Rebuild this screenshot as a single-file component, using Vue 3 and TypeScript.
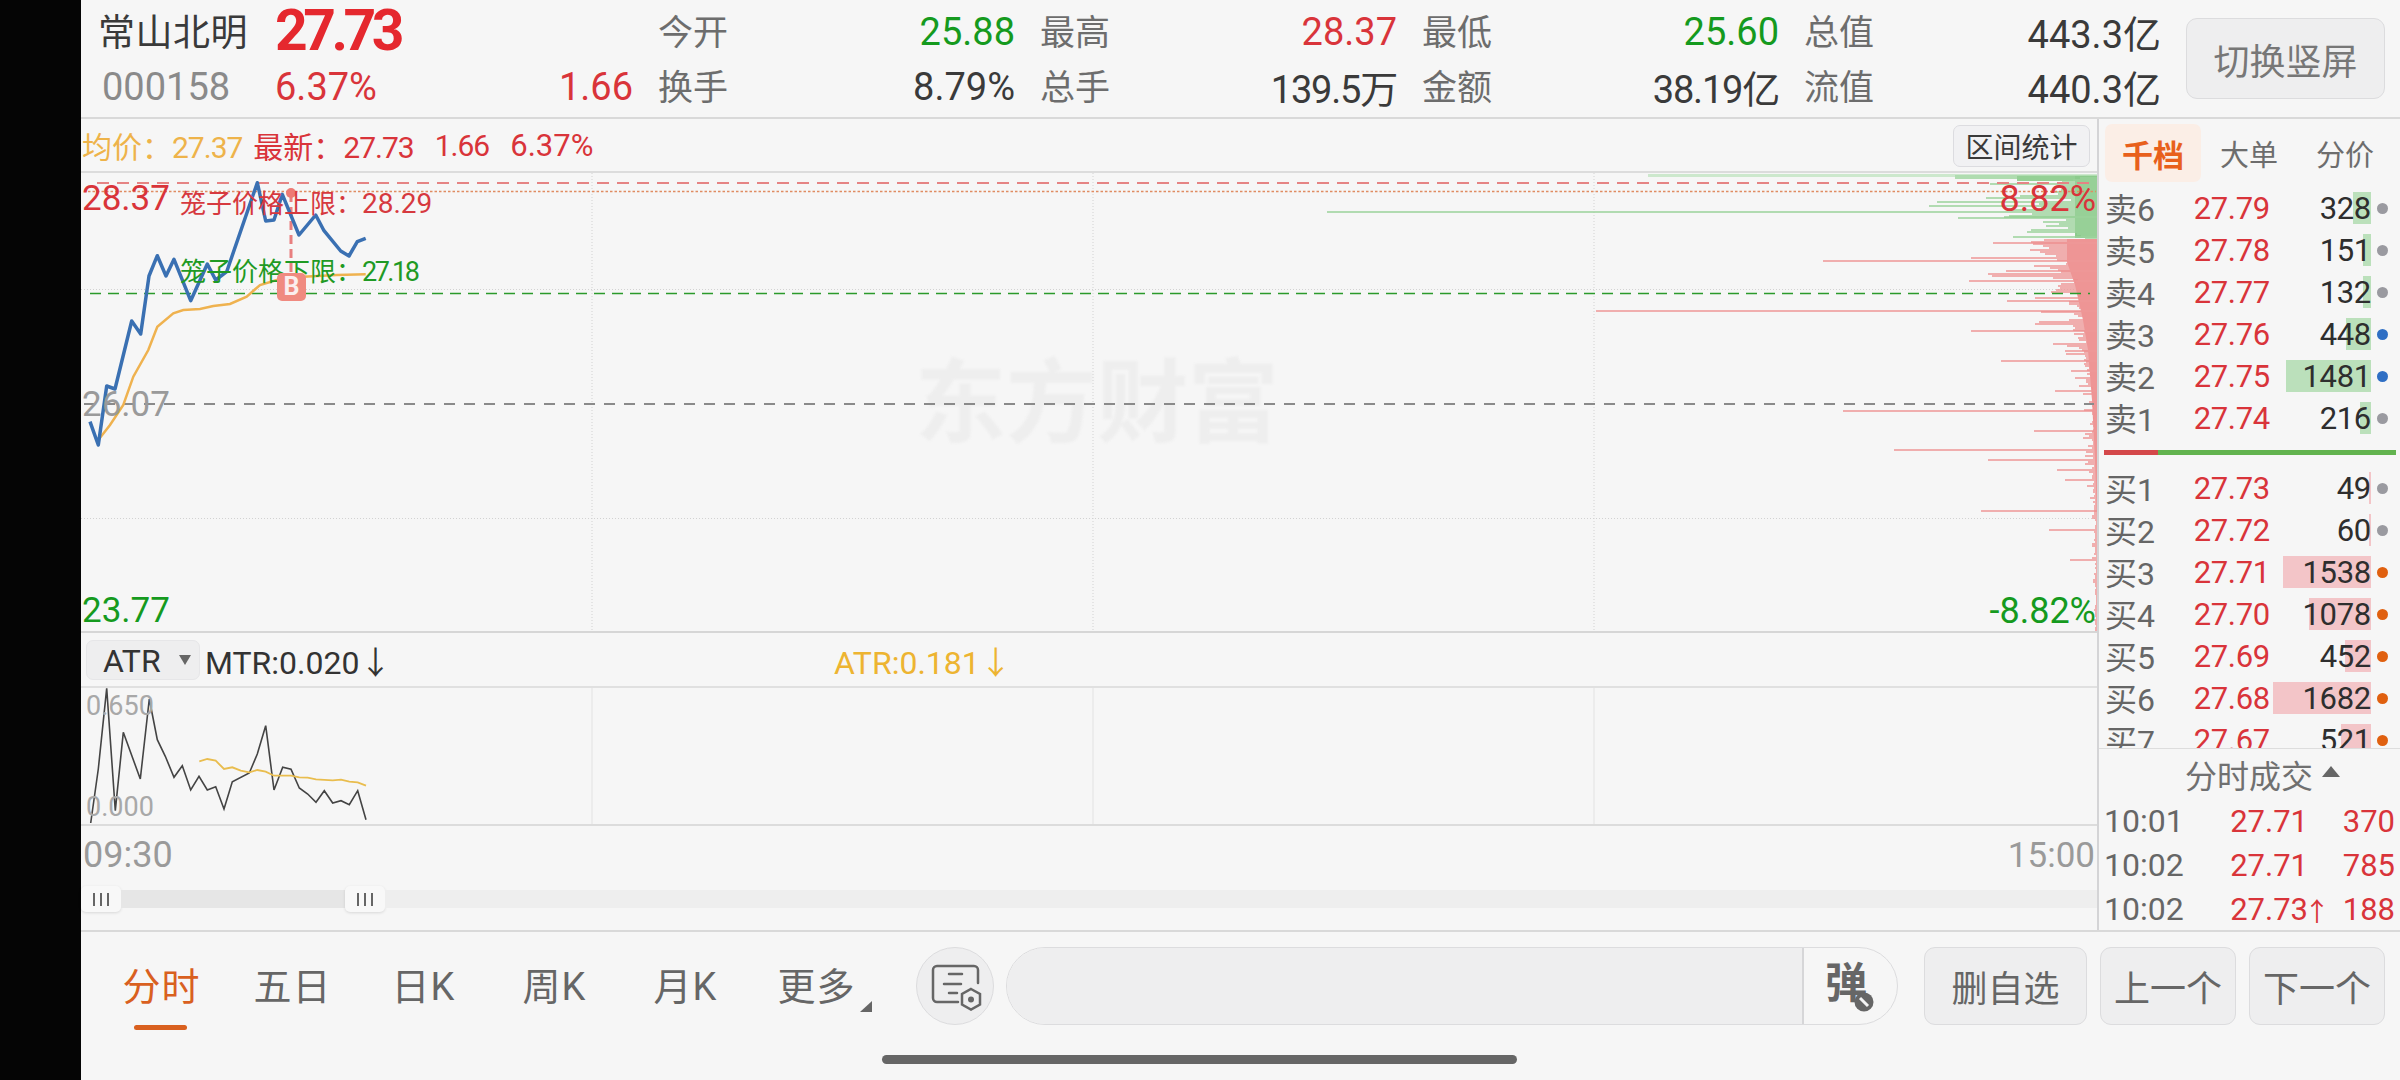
<script setup lang="ts">
type P = [number, number]
const toPts = (a: P[], ox: number, oy: number) =>
  a.map(([x, y]) => `${(ox + x / 3).toFixed(1)},${(oy + y / 3).toFixed(1)}`).join(' ')

const bluePts = toPts([[60,815],[85,885],[110,708],[135,717],[185,513],[212,552],[237,378],[262,317],[288,378],[312,328],[362,452],[412,342],[437,390],[470,365],[562,98],[587,213],[612,210],[637,133],[687,255],[737,195],[762,242],[812,303],[837,318],[862,275],[887,265]], 70, 150)
const avgPts = toPts([[85,870],[120,825],[160,765],[190,680],[235,600],[262,530],[310,490],[340,480],[390,477],[430,468],[480,462],[530,440],[570,405],[620,390],[700,380],[800,375],[887,373]], 70, 150)
const mtrPts = toPts([[92,612],[115,450],[140,208],[166,575],[190,340],[241,480],[268,240],[292,362],[316,412],[342,475],[367,440],[392,513],[417,472],[442,513],[467,503],[492,570],[517,488],[568,462],[592,405],[617,320],[642,513],[668,445],[693,451],[718,507],[743,525],[768,550],[793,515],[818,552],[843,545],[868,557],[893,515],[918,602]], 60, 620)
const atrPts = toPts([[418,427],[442,420],[467,425],[492,450],[517,445],[542,455],[568,460],[592,453],[617,458],[642,470],[693,470],[718,475],[743,476],[768,481],[818,484],[843,482],[868,488],[893,490],[918,500]], 60, 620)

let seed = 7
const rnd = () => { seed = (seed * 16807) % 2147483647; return seed / 2147483647 }
const env = (t: P[], y: number) => {
  for (let i = 1; i < t.length; i++) {
    if (y <= t[i][0]) {
      const k = (y - t[i - 1][0]) / (t[i][0] - t[i - 1][0])
      return t[i - 1][1] + k * (t[i][1] - t[i - 1][1])
    }
  }
  return t[t.length - 1][1]
}
const R = 2097
const build = (from: number, to: number, t: P[], spikes: P[]) => {
  let d = ''
  for (let y = from; y <= to; y += 2) {
    const w = env(t, y) * (0.55 + rnd() * (rnd() > 0.7 ? 2.6 : 0.9))
    d += `M${(R - w).toFixed(0)} ${y}H${R}`
  }
  for (const [y, x] of spikes) d += `M${x} ${y}H${R}`
  return d
}
const greenD = build(178, 238, [[178,30],[190,28],[200,40],[212,75],[222,45],[232,25],[238,14]],
  [[212,1327],[202,1937],[217,2004],[222,2043],[232,2027],[237,2013],[184,1990],[196,2020]])
const redD = build(240, 632, [[240,48],[260,48],[280,34],[310,24],[340,15],[370,9],[410,5],[460,4],[500,3],[520,2],[632,1.5]],
  [[243,1993],[261,1823],[271,2006],[281,1969],[301,2007],[311,1596],[331,1971],[351,2065],[361,2001],[371,2071],[391,2055],[411,1843],[431,2034],[450,1894],[460,1988],[470,2057],[480,2065],[511,1981],[530,2049],[560,2070]])

const statCells = [
  ['今开', '25.88', 'g'], ['最高', '28.37', 'r'], ['最低', '25.60', 'g'], ['总值', '443.3亿', 'd'],
  ['换手', '8.79%', 'd'], ['总手', '139.5万', 'd narrow'], ['金额', '38.19亿', 'd narrow'], ['流值', '440.3亿', 'd'],
]

const asks = [
  { l: '卖6', p: '27.79', q: '328', w: 18, c: '#9a9aa0' },
  { l: '卖5', p: '27.78', q: '151', w: 8, c: '#9a9aa0' },
  { l: '卖4', p: '27.77', q: '132', w: 8, c: '#9a9aa0' },
  { l: '卖3', p: '27.76', q: '448', w: 25, c: '#2f6fc4' },
  { l: '卖2', p: '27.75', q: '1481', w: 85, c: '#2f6fc4' },
  { l: '卖1', p: '27.74', q: '216', w: 11, c: '#9a9aa0' },
]
const bids = [
  { l: '买1', p: '27.73', q: '49', w: 2, c: '#9a9aa0' },
  { l: '买2', p: '27.72', q: '60', w: 2, c: '#9a9aa0' },
  { l: '买3', p: '27.71', q: '1538', w: 88, c: '#e0600f' },
  { l: '买4', p: '27.70', q: '1078', w: 62, c: '#e0600f' },
  { l: '买5', p: '27.69', q: '452', w: 26, c: '#e0600f' },
  { l: '买6', p: '27.68', q: '1682', w: 98, c: '#e0600f' },
  { l: '买7', p: '27.67', q: '521', w: 30, c: '#e0600f' },
]
const trades = [
  { t: '10:01', p: '27.71', a: '', q: '370' },
  { t: '10:02', p: '27.71', a: '', q: '785' },
  { t: '10:02', p: '27.73', a: '↑', q: '188' },
]
const periods = ['分时', '五日', '日K', '周K', '月K', '更多']
</script>

<template>
  <div class="screen">
    <div class="notch"></div>
    <div class="main">
      <header class="head">
        <div class="quote">
          <div class="qrow">
            <span class="name">常山北明</span>
            <span class="last">27.73</span>
          </div>
          <div class="qrow">
            <span class="code">000158</span>
            <span class="pct">6.37%</span>
            <span class="chg">1.66</span>
          </div>
        </div>
        <div class="stats">
          <div v-for="s in statCells" :key="s[0]" class="stat">
            <span class="lab">{{ s[0] }}</span>
            <span :class="s[2]">{{ s[1] }}</span>
          </div>
        </div>
        <button class="switch">切换竖屏</button>
      </header>

      <section class="body">
        <div class="chartcol">
          <div class="info">
            <span class="y">均价：<span class="num">27.37</span></span>
            <span class="r latest">最新：<span class="num">27.73</span></span>
            <span class="r gap1 num">1.66</span>
            <span class="r gap2">6.37%</span>
            <button class="range">区间统计</button>
          </div>

          <div class="plot">
            <div class="mark">东方财富</div>
            <svg class="canvas" viewBox="81 173 2017 460" width="2017" height="460">
              <g stroke="#d2d2d2" stroke-width="1" stroke-dasharray="1 2">
                <path d="M592 173V633M1093 173V633M1594 173V633M81 289.500H2098M81 518.500H2098" fill="none" />
              </g>
              <rect x="1648" y="174" width="449" height="3" fill="#cde8cd" />
              <rect x="1955" y="175" width="142" height="4" fill="#b0dcb0" />
              <rect x="2017" y="176" width="80" height="5" fill="#95d095" />
              <rect x="2075" y="176" width="22" height="62" fill="#8ccb8c" />
              <polygon points="2067,239 2097,239 2097,520 2095,460 2092,400 2088,350 2083,320 2075,285 2067,262" fill="#ee9090" />
              <path :d="greenD" stroke="#9ad29a" stroke-width="1.500" fill="none" />
              <path :d="redD" stroke="#ee9797" stroke-width="1.500" fill="none" />
              <path d="M97 183H2090" stroke="#e58484" stroke-width="2" stroke-dasharray="12 8" fill="none" />
              <path d="M88 191.500H2096" stroke="#e08c62" stroke-width="1.500" stroke-dasharray="2.500 2" fill="none" />
              <path d="M90 293.500H2090" stroke="#2b9a2b" stroke-width="1.500" stroke-dasharray="11 7" fill="none" />
              <path d="M84 404H2094" stroke="#8a8a8a" stroke-width="2" stroke-dasharray="11 9" fill="none" />
              <path d="M291 193V273" stroke="#e87f7f" stroke-width="3" stroke-dasharray="9 5" fill="none" />
              <circle cx="291" cy="193" r="5" fill="#ee7a74" />
              <polyline :points="avgPts" fill="none" stroke="#efb24f" stroke-width="2.500" />
              <polyline :points="bluePts" fill="none" stroke="#3a70b2" stroke-width="3.500" stroke-linejoin="round" />
            </svg>
            <span class="axis r at-top">28.37</span>
            <span class="axis grey at-mid">26.07</span>
            <span class="axis g at-low">23.77</span>
            <span class="axis r at-top right">8.82%</span>
            <span class="axis g at-low right">-8.82%</span>
            <span class="cage up">笼子价格上限：<span class="cnum">28.29</span></span>
            <span class="cage down">笼子价格下限：<span class="cnum tight">27.18</span></span>
            <span class="bmark">B</span>
          </div>

          <div class="ind-head">
            <div class="select">ATR<i class="tri"></i></div>
            <span class="mtr">MTR:0.020↓</span>
            <span class="atr">ATR:0.181↓</span>
          </div>

          <div class="ind">
            <svg class="canvas" viewBox="81 689 2017 136" width="2017" height="136">
              <path d="M592 689V825M1093 689V825M1594 689V825" stroke="#e2e2e2" stroke-width="1" fill="none" />
              <polyline :points="mtrPts" fill="none" stroke="#444" stroke-width="1.600" />
              <polyline :points="atrPts" fill="none" stroke="#e9bd4e" stroke-width="1.800" />
            </svg>
            <span class="ind-lab top">0.650</span>
            <span class="ind-lab bot">0.000</span>
          </div>

          <div class="times"><span>09:30</span><span class="end">15:00</span></div>

          <div class="scroll">
            <div class="handle"><i></i><i></i><i></i></div>
            <div class="fill"></div>
            <div class="handle"><i></i><i></i><i></i></div>
            <div class="rest"></div>
          </div>
        </div>

        <aside class="side">
          <div class="tabs">
            <span class="tab on">千档</span>
            <span class="tab">大单</span>
            <span class="tab">分价</span>
          </div>
          <div v-for="o in asks" :key="o.l" class="row">
            <span class="rl">{{ o.l }}</span>
            <span class="rp">{{ o.p }}</span>
            <span class="rq"><b class="bar sell" :style="{ width: o.w + 'px' }"></b><em>{{ o.q }}</em></span>
            <i class="dot" :style="{ background: o.c }"></i>
          </div>
          <div class="ratio"><div class="ratio-r"></div><div class="ratio-g"></div></div>
          <div class="bids">
            <div v-for="o in bids" :key="o.l" class="row">
              <span class="rl">{{ o.l }}</span>
              <span class="rp">{{ o.p }}</span>
              <span class="rq"><b class="bar buy" :style="{ width: o.w + 'px' }"></b><em>{{ o.q }}</em></span>
              <i class="dot" :style="{ background: o.c }"></i>
            </div>
          </div>
          <div class="tr-head">分时成交<i class="up-tri"></i></div>
          <div v-for="(t, i) in trades" :key="i" class="trade">
            <span class="tt">{{ t.t }}</span>
            <span class="tp">{{ t.p }}</span>
            <span class="ta">{{ t.a }}</span>
            <span class="tq">{{ t.q }}</span>
          </div>
        </aside>
      </section>

      <footer class="foot">
        <nav class="periods">
          <div v-for="(p, i) in periods" :key="p" class="period" :class="{ on: i === 0, more: i === 5 }">{{ p }}</div>
        </nav>
        <div class="round">
          <svg width="78" height="78" viewBox="0 0 78 78" fill="none" stroke="#666" stroke-width="2.500" stroke-linecap="round">
            <path d="M42 55H21a4 4 0 0 1-4-4V23a4 4 0 0 1 4-4h37a4 4 0 0 1 4 4v13" />
            <path d="M33 27H46M28 37H45M33 46H41" />
            <path d="M55 42l9 5v10.500L55 62.500l-9-5V47z" />
            <circle cx="55" cy="52.500" r="3" fill="#666" stroke="none" />
          </svg>
        </div>
        <div class="danmu">
          <div class="danmu-in"></div>
          <div class="danmu-btn">
            <span>弹</span>
            <svg class="nosign" width="20" height="20" viewBox="0 0 20 20">
              <circle cx="10" cy="10" r="9.500" fill="#666" />
              <path d="M6 6L14 14" stroke="#f4f4f4" stroke-width="3" />
            </svg>
          </div>
        </div>
        <button class="act del">删自选</button>
        <button class="act nav">上一个</button>
        <button class="act nav">下一个</button>
      </footer>
      <div class="home"></div>
    </div>
  </div>
</template>

<style>
html, body { margin: 0; background: #000; }
</style>

<style scoped>
* { box-sizing: border-box; }
.screen {
  width: 2400px; height: 1080px; display: flex; overflow: hidden; background: #f6f6f6;
  font-family: Roboto, "Noto Sans CJK SC", sans-serif; color: #333;
}
.notch { width: 81px; background: #050505; flex: none; }
.main { width: 2319px; display: flex; flex-direction: column; position: relative; }
.r { color: #d9343a; }
.g { color: #159a1e; }
.d { color: #3a3a3a; }
.y { color: #eeb34a; }
.grey { color: #9a9a9a; }
.narrow { letter-spacing: -1.200px; }

.head { height: 119px; flex: none; display: flex; border-bottom: 2px solid #d9d9d9; }
.quote { width: 577px; padding: 4px 25px 0 17px; }
.qrow { height: 55px; display: flex; align-items: center; }
.name { width: 177px; font-size: 37px; color: #3a3a3a; margin-top: -3px; letter-spacing: 0.500px; }
.last { font-size: 57px; font-weight: 700; color: #e5282e; letter-spacing: -4.500px; line-height: 1.200; padding-right: 5px; }
.code { width: 177px; font-size: 38px; color: #8a8a8a; padding-left: 4px; }
.pct { font-size: 38px; color: #d9343a; }
.chg { margin-left: auto; font-size: 38px; color: #d9343a; }
.stats { width: 1528px; flex: none; padding-top: 4px; display: grid; grid-template-columns: repeat(4, 382px); grid-auto-rows: 55px; }
.stat { display: flex; justify-content: space-between; align-items: center; padding-right: 25px; font-size: 38px; }
.lab { font-size: 35px; color: #6d6d6d; margin-top: -4px; }
.switch {
  width: 199px; height: 81px; margin-top: 18px; border: 1.500px solid #dcdcde; border-radius: 11px; background: #eeeeef;
  font: 36px Roboto, "Noto Sans CJK SC", sans-serif; color: #777; padding: 0;
}

.body { flex: none; height: 813px; display: flex; border-bottom: 2px solid #d9d9d9; }
.chartcol { width: 2018px; flex: none; display: flex; flex-direction: column; border-right: 2px solid #d4d4d6; }
.info { height: 54px; flex: none; display: flex; align-items: center; font-size: 30px; border-bottom: 2px solid #dcdcdc; position: relative; padding-left: 1px; }
.num { letter-spacing: -1px; }
.latest { margin-left: 11px; }
.gap1 { margin-left: 21px; }
.gap2 { margin-left: 21px; font-size: 31px; }
.range {
  position: absolute; right: 7px; top: 6px; width: 137px; height: 42px; border: 1.500px solid #dcdce0; border-radius: 7px;
  background: #f1f1f3; font: 28px Roboto, "Noto Sans CJK SC", sans-serif; color: #3a3a3a; padding: 0;
}

.plot { height: 460px; flex: none; position: relative; border-bottom: 2px solid #d6d6d6; overflow: hidden; }
.canvas { position: absolute; left: 0; top: 0; display: block; }
.mark { position: absolute; left: 834px; top: 186px; font-size: 91px; font-weight: 700; color: #eeeeee; filter: blur(1px); line-height: 1; }
.axis { position: absolute; left: 1px; font-size: 35px; line-height: 40px; }
.axis.right { left: auto; right: 1px; font-size: 36px; }
.at-top { top: 6px; }
.at-mid { top: 212px; }
.at-low { top: 418px; }
.cage { position: absolute; left: 99px; font-size: 26px; line-height: 30px; white-space: nowrap; }
.cnum { font-size: 28px; }
.tight { letter-spacing: -2.500px; font-size: 27px; }
.cage.up { top: 16px; color: #d6393f; }
.cage.down { top: 84px; color: #1f9a24; }
.bmark {
  position: absolute; left: 196px; top: 100px; width: 29px; height: 28px; border-radius: 5px; background: #f08a80;
  color: #fbeeee; font-size: 25px; font-weight: 700; line-height: 28px; text-align: center;
}

.ind-head { height: 55px; flex: none; display: flex; align-items: center; font-size: 32px; border-bottom: 2px solid #e0e0e0; padding-left: 5px; position: relative; color: #333; }
.select { width: 114px; height: 40px; background: #eeeeef; border: 1px solid #e6e6e8; border-radius: 7px; padding-left: 16px; line-height: 40px; position: relative; font-size: 32px; }
.tri { position: absolute; right: 8px; top: 14px; border-left: 6px solid transparent; border-right: 6px solid transparent; border-top: 10px solid #666; }
.mtr { margin-left: 5px; }
.atr { position: absolute; left: 753px; color: #edb431; }

.ind { height: 138px; flex: none; position: relative; border-bottom: 2px solid #dcdcdc; }
.ind-lab { position: absolute; left: 5px; font-size: 27px; line-height: 30px; color: #a8a8a8; }
.ind-lab.top { top: 3px; }
.ind-lab.bot { top: 104px; }
.times { height: 58px; flex: none; display: flex; justify-content: space-between; align-items: center; font-size: 36px; color: #9a9a9a; padding: 0 2px 0 2px; }
.end { font-size: 35px; }
.scroll { height: 26px; flex: none; display: flex; align-items: center; margin-top: 2px; }
.handle { width: 40px; height: 26px; flex: none; background: #f8f8f8; border-radius: 5px; box-shadow: 0 1px 3px rgba(0,0,0,.12); display: flex; align-items: center; justify-content: center; gap: 5px; }
.handle i { width: 2px; height: 13px; background: #666; }
.fill { width: 224px; height: 18px; flex: none; background: #e6e6e6; }
.rest { flex: 1; height: 18px; background: #eeeeee; }

.side { flex: 1; display: flex; flex-direction: column; min-width: 0; }
.tabs { height: 67px; flex: none; display: flex; padding: 5px 0 0 6px; }
.tab { width: 96px; height: 58px; display: flex; align-items: center; justify-content: center; font-size: 29px; color: #6d6d6d; border-radius: 7px; }
.tab.on { color: #e8601c; background: #fbeee6; font-size: 31px; font-weight: 700; }
.row { height: 42px; flex: none; display: grid; grid-template-columns: 65px 100px 101px 24px; align-items: center; padding-left: 6px; font-size: 31px; letter-spacing: -0.300px; }
.rl { color: #666; font-size: 32px; margin-top: -2px; letter-spacing: 0; white-space: nowrap; }
.rp { text-align: right; color: #d9343a; }
.rq { position: relative; height: 32px; display: flex; justify-content: flex-end; align-items: center; color: #2e2e2e; }
.rq em { position: relative; font-style: normal; }
.bar { position: absolute; right: 0; top: 0; height: 32px; }
.bar.sell { background: #bbe0bb; }
.bar.buy { background: #f3c5c8; }
.dot { width: 11px; height: 11px; border-radius: 50%; justify-self: center; margin-left: -1px; }
.ratio { height: 28px; flex: none; display: flex; align-items: center; padding: 0 4px 0 5px; }
.ratio-r { width: 54px; height: 5px; background: #d4484a; }
.ratio-g { flex: 1; height: 5px; background: #62b34f; }
.bids { height: 283px; flex: none; overflow: hidden; border-bottom: 1px solid #dddddd; }
.tr-head { height: 50px; flex: none; display: flex; align-items: center; justify-content: center; font-size: 32px; color: #707070; padding-left: 26px; }
.up-tri { margin-left: 9px; margin-top: -6px; border-left: 9px solid transparent; border-right: 9px solid transparent; border-bottom: 11px solid #666; }
.trade { height: 44px; flex: none; display: grid; grid-template-columns: 114px 90px 18px 69px; align-items: center; padding-left: 5px; font-size: 31px; }
.tt { color: #666; font-size: 32px; }
.tp, .tq { text-align: right; color: #d9343a; }
.ta { color: #d9343a; text-align: center; font-size: 26px; margin-left: -4px; }

.foot { height: 146px; flex: none; display: flex; align-items: flex-start; padding-top: 15px; position: relative; }
.periods { display: flex; width: 835px; padding-left: 15px; flex: none; }
.period { width: 131px; height: 78px; display: flex; align-items: center; justify-content: center; font-size: 38px; color: #666; position: relative; padding-bottom: 5px; letter-spacing: 1px; }
.period.on { color: #d9601f; }
.period.on::after { content: ""; position: absolute; left: 38px; top: 78px; width: 53px; height: 5px; border-radius: 3px; background: #d9601f; }
.period.more::after { content: ""; position: absolute; right: 10px; top: 54px; border-left: 12px solid transparent; border-bottom: 11px solid #666; }
.round { width: 78px; height: 78px; flex: none; border-radius: 50%; background: #eeeeef; border: 1.500px solid #dcdcde; }
.round svg { display: block; margin: -1.500px; }
.danmu { width: 892px; height: 78px; flex: none; margin-left: 12px; display: flex; border: 1.500px solid #dcdcde; border-radius: 39px; overflow: hidden; }
.danmu-in { width: 797px; flex: none; background: #eeeeef; border-right: 2px solid #d6d6d8; }
.danmu-btn { flex: 1; position: relative; font-size: 42px; font-weight: 700; color: #666; line-height: 72px; padding-left: 21px; }
.nosign { position: absolute; left: 50px; top: 44px; }
.act { height: 78px; flex: none; border: 1.500px solid #dcdcde; border-radius: 11px; background: #eeeeef; font: 36px Roboto, "Noto Sans CJK SC", sans-serif; color: #666; padding: 0; }
.del { width: 163px; margin-left: 26px; }
.nav { width: 136px; margin-left: 13px; }
.home { position: absolute; left: 801px; top: 1055px; width: 635px; height: 9px; border-radius: 5px; background: #666; }
</style>
